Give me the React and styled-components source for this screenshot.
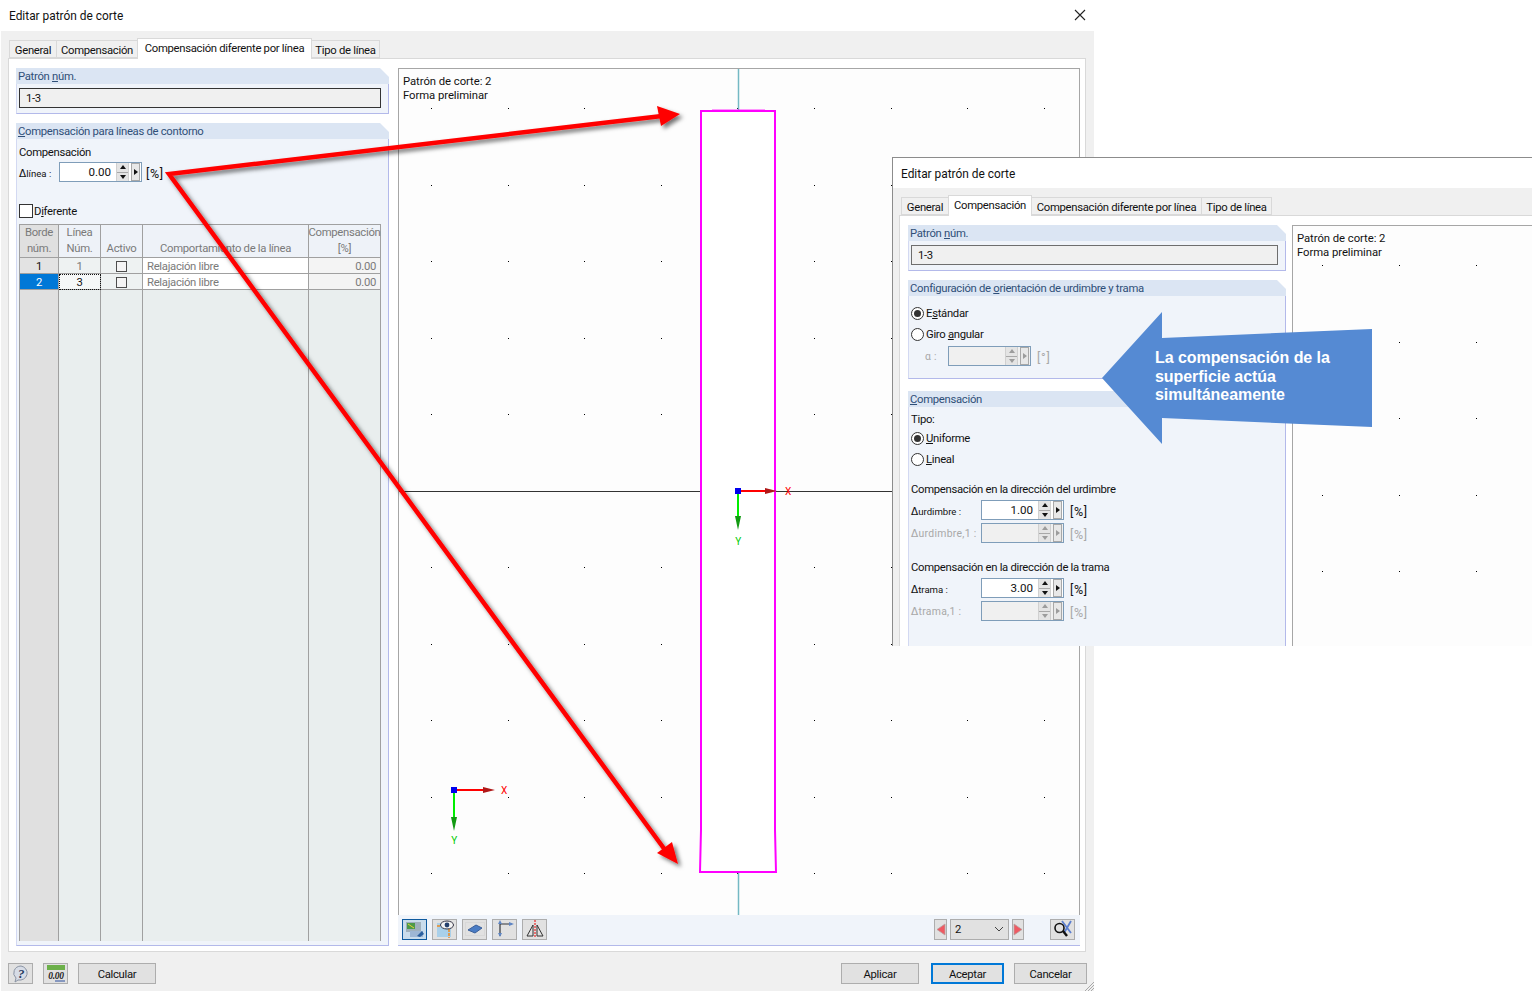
import React from "react";
import styled, { createGlobalStyle } from "styled-components";

const GlobalStyle = createGlobalStyle`
  html, body {
    margin: 0;
    background: #fff;
  }
  body {
    font-family: Roboto, "Noto Sans", sans-serif;
    font-size: 11.3px;
    letter-spacing: -0.3px;
    color: #111;
  }
  * { box-sizing: border-box; }
`;

const Page = styled.div`
  position: relative;
  width: 1532px;
  height: 992px;
  overflow: hidden;
`;

const MainDialog = styled.div`
  width: 1094px;
  height: 991px;
  display: flex;
  flex-direction: column;
`;

const SideDialog = styled.div`
  position: absolute;
  left: 892px;
  top: 157px;
  width: 640px;
  height: 489px;
  background: #fff;
  border-top: 1px solid #8c8c8c;
  border-left: 1px solid #8c8c8c;
  display: flex;
  flex-direction: column;
  overflow: hidden;
`;

const TitleBar = styled.div`
  flex: 0 0 ${(p) => p.$h}px;
  display: flex;
  align-items: center;
  justify-content: space-between;
  padding: 1px 8px 0 ${(p) => p.$left}px;
  font-size: 11.9px;
  letter-spacing: 0;
  background: #fff;
  svg {
    margin-top: -2px;
  }
`;

const Body = styled.div`
  flex: 1;
  min-height: 0;
  margin-left: ${(p) => p.$left || 0}px;
  padding-left: ${(p) => p.$pad}px;
  background: #f0f0f0;
  display: flex;
  flex-direction: column;
`;

const TabStrip = styled.div`
  flex: 0 0 ${(p) => p.$h}px;
  display: flex;
  align-items: flex-end;
  padding-left: ${(p) => p.$left}px;
`;

const Tab = styled.div`
  width: ${(p) => p.$w}px;
  height: ${(p) => (p.$active ? 21 : 18)}px;
  margin-bottom: ${(p) => (p.$active ? -1 : 0)}px;
  padding: ${(p) => (p.$active ? "0 0 1px" : "3px 0 0")};
  display: flex;
  align-items: center;
  justify-content: center;
  white-space: nowrap;
  background: ${(p) => (p.$active ? "#fff" : "#f0f0f0")};
  border: 1px solid #d9d9d9;
  border-bottom: ${(p) => (p.$active ? "none" : "1px solid #d9d9d9")};
  margin-left: -1px;
  position: relative;
  z-index: ${(p) => (p.$active ? 1 : 0)};
`;

const TabPanel = styled.div`
  flex: ${(p) => (p.$h ? `0 0 ${p.$h}px` : "1")};
  min-height: 0;
  width: ${(p) => p.$w}px;
  background: #fff;
  border: 1px solid #d9d9d9;
  display: flex;
  gap: ${(p) => p.$gap}px;
  padding: 9px 5px 5px ${(p) => p.$left}px;
`;

const LeftColumn = styled.div`
  flex: 0 0 ${(p) => p.$w}px;
  min-width: 0;
  display: flex;
  flex-direction: column;
  gap: 9px;
  min-height: 0;
`;

const RightColumn = styled.div`
  flex: 1;
  min-width: 0;
  display: flex;
  flex-direction: column;
`;

const Group = styled.section`
  flex: ${(p) => (p.$grow ? "1" : "none")};
  min-height: 0;
  margin-top: ${(p) => p.$mt || 0}px;
  display: flex;
  flex-direction: column;
`;

const GroupHead = styled.div`
  height: 16px;
  flex: none;
  padding-left: 2px;
  line-height: 18px;
  color: #2f4f78;
  background: #dbe5f3;
  clip-path: polygon(0 0, calc(100% - 9px) 0, 100% 9px, 100% 100%, 0 100%);
`;

const GroupBody = styled.div`
  flex: ${(p) => (p.$h ? `0 0 ${p.$h}px` : "1")};
  min-height: 0;
  display: flex;
  flex-direction: column;
  padding: ${(p) => p.$top || 0}px 7px 0 2px;
  background: #f0f4fa;
  border: 1px solid #b3b9ea;
  border-top: none;
  border-left-color: #d3d9f2;
`;

const Line = styled.div`
  flex: none;
  height: ${(p) => p.$h}px;
  margin-top: ${(p) => p.$mt || 0}px;
  padding-left: ${(p) => p.$indent || 0}px;
  display: flex;
  align-items: center;
  gap: ${(p) => p.$gap || 0}px;
  color: ${(p) => (p.$muted ? "#9a9a9a" : "#111")};
  white-space: nowrap;
`;

const Key = styled.span`
  text-decoration: underline;
  text-underline-offset: 1px;
`;

const ReadOnlyField = styled.div`
  height: 20px;
  flex: none;
  display: flex;
  align-items: center;
  padding-left: 6px;
  background: #f0f0f0;
  border: 1.5px solid ${(p) => p.$edge};
`;

const Delta = styled.span`
  flex: 0 0 ${(p) => p.$w}px;
  padding-top: 1px;
  color: ${(p) => (p.$muted ? "#a8a8a8" : "#111")};
  font-size: ${(p) => (p.$muted ? 10.4 : 9.6)}px;
  letter-spacing: ${(p) => (p.$muted ? 0.3 : 0)}px;
  b {
    font-size: 10.5px;
    font-weight: 400;
    font-family: "DejaVu Sans", sans-serif;
  }
`;

const SpinBox = styled.div`
  width: ${(p) => p.$w}px;
  height: 20px;
  flex: none;
  display: flex;
  align-items: center;
  padding-right: 1px;
  background: ${(p) => (p.$off ? "#f0f0f0" : "#fff")};
  border: 1px solid #7f9db9;
`;

const SpinValue = styled.span`
  flex: 1;
  text-align: right;
  padding-right: 5px;
  font-size: 11.6px;
  letter-spacing: 0;
`;

const SpinStack = styled.div`
  width: 13px;
  height: 18px;
  display: flex;
  flex-direction: column;
  margin-right: 2px;
  border-left: 1px solid #d0d0d0;
  border-right: 1px solid #d0d0d0;
`;

const SpinPart = styled.div`
  flex: 1;
  display: flex;
  align-items: center;
  justify-content: center;
  background: #e4e4e4;
  & + & {
    border-top: 1px solid #a8a8a8;
  }
`;

const SpinNext = styled.div`
  width: 9px;
  height: 18px;
  display: flex;
  align-items: center;
  justify-content: center;
  background: #e8e8e8;
  border: 1px solid #a8a8a8;
`;

const Tri = styled.i`
  display: block;
  width: 0;
  height: 0;
  border-style: solid;
  border-color: transparent;
  ${(p) => {
    const c = p.$off ? "#9c9c9c" : "#111";
    if (p.$dir === "up") return `border-width: 0 3.5px 4px; border-bottom-color: ${c};`;
    if (p.$dir === "down") return `border-width: 4px 3.5px 0; border-top-color: ${c};`;
    return `border-width: 3.5px 0 3.5px 4px; border-left-color: ${c};`;
  }}
`;

const Unit = styled.span`
  margin-left: ${(p) => p.$ml}px;
  padding-top: 2px;
  font-size: 12.5px;
  letter-spacing: 0.7px;
  color: ${(p) => (p.$muted ? "#a8a8a8" : "#111")};
`;

const CheckBoxBig = styled.span`
  width: 14px;
  height: 14px;
  flex: none;
  background: #fff;
  border: 1px solid #333;
`;

const RadioDot = styled.span`
  width: 13px;
  height: 13px;
  flex: none;
  border-radius: 50%;
  border: 1px solid #333;
  background: #fff;
  display: flex;
  align-items: center;
  justify-content: center;
  margin-right: 2px;
  &::after {
    content: "";
    width: 7px;
    height: 7px;
    border-radius: 50%;
    background: ${(p) => (p.$on ? "#333" : "transparent")};
  }
`;

const Grid = styled.div`
  flex: 1;
  min-height: 0;
  margin-top: 4px;
  margin-bottom: 4px;
  display: grid;
  grid-template-columns: 39px 42px 42px 166px minmax(0, 1fr);
  grid-template-rows: 33px 16px 16px 1fr;
  border-top: 1px solid #a0a0a0;
  border-left: 1px solid #a0a0a0;
  color: #7a7a7a;
`;

const HeadCell = styled.div`
  display: flex;
  flex-direction: column;
  justify-content: flex-end;
  align-items: center;
  line-height: 16px;
  text-align: center;
  white-space: nowrap;
  background: ${(p) => (p.$first ? "#e0e0e0" : "#eef2f8")};
  border-right: 1px solid #a0a0a0;
  border-bottom: 1px solid #a0a0a0;
`;

const Cell = styled.div`
  display: flex;
  align-items: center;
  justify-content: ${(p) => p.$align || "center"};
  padding: 1px ${(p) => (p.$align ? 4 : 0)}px 0;
  background: ${(p) => p.$bg || "#eef2f2"};
  color: ${(p) => p.$color || "#7a7a7a"};
  border-right: 1px solid #a0a0a0;
  border-bottom: 1px solid #a0a0a0;
  outline: ${(p) => (p.$focus ? "1px dotted #111" : "none")};
  outline-offset: -1px;
`;

const SmallCheck = styled.span`
  width: 11px;
  height: 11px;
  background: #f4f4f4;
  border: 1px solid #4d4d4d;
`;

const Filler = styled.div`
  background: ${(p) => (p.$first ? "#e0e0e0" : "#e9eeee")};
  border-right: 1px solid #a0a0a0;
`;

const Canvas = styled.div`
  flex: 1;
  min-height: 0;
  position: relative;
  overflow: hidden;
  background: #fdfdfd;
  border: 1px solid #a6a6a6;
  border-bottom: none;
  padding: 6px 4px;
  line-height: 14px;
  svg {
    position: absolute;
    left: 0;
    top: 0;
  }
`;

const CanvasNote = styled.div`
  position: relative;
  letter-spacing: -0.05px;
`;

const ViewBar = styled.div`
  flex: 0 0 31px;
  display: flex;
  align-items: center;
  gap: 5px;
  padding: 0 5px 2px 4px;
  background: #f0f4fa;
  border-bottom: 1px solid #b3b9ea;
`;

const IconButton = styled.div`
  flex: none;
  width: ${(p) => p.$w || 25}px;
  height: 21px;
  margin-left: ${(p) => p.$ml || 0}px;
  display: flex;
  align-items: center;
  justify-content: center;
  background: ${(p) => (p.$active ? "#c9dcec" : "#e1e1e1")};
  border: 1px solid ${(p) => (p.$active ? "#0f5a9e" : "#adadad")};
`;

const Spacer = styled.div`
  flex: 1;
`;

const Combo = styled.div`
  flex: none;
  width: 59px;
  height: 21px;
  margin: 0 -2px;
  display: flex;
  align-items: center;
  justify-content: space-between;
  padding: 0 4px;
  background: #e1e1e1;
  border: 1px solid #adadad;
`;

const Footer = styled.div`
  flex: 0 0 39px;
  display: flex;
  align-items: center;
  padding: 4px 7px 0 0;
`;

const PushButton = styled.div`
  flex: none;
  width: ${(p) => p.$w}px;
  height: 21px;
  margin-left: ${(p) => p.$ml || 0}px;
  padding-top: 1px;
  display: flex;
  align-items: center;
  justify-content: center;
  background: #e1e1e1;
  border: ${(p) => (p.$default ? "2px solid #0078d7" : "1px solid #adadad")};
`;

const Grip = styled.svg`
  position: absolute;
  left: 1084px;
  top: 981px;
`;

const ArrowLayer = styled.svg`
  position: absolute;
  left: 0;
  top: 0;
  pointer-events: none;
`;

const CalloutText = styled.div`
  position: absolute;
  left: 1155px;
  top: 349px;
  font-family: "Liberation Sans", Arial, sans-serif;
  font-size: 16px;
  font-weight: 700;
  line-height: 18.5px;
  letter-spacing: -0.06px;
  color: #fff;
  white-space: nowrap;
`;

const range = (n) => Array.from({ length: n }, (_, i) => i);

const Close = () => (
  <svg width="12" height="12" viewBox="0 0 12 12">
    <path d="M1 1 L11 11 M11 1 L1 11" stroke="#222" strokeWidth="1.1" fill="none" />
  </svg>
);

const Spinner = ({ value, w, off }) => (
  <SpinBox $w={w} $off={off}>
    <SpinValue>{value}</SpinValue>
    <SpinStack>
      <SpinPart><Tri $dir="up" $off={off} /></SpinPart>
      <SpinPart><Tri $dir="down" $off={off} /></SpinPart>
    </SpinStack>
    <SpinNext><Tri $dir="right" $off={off} /></SpinNext>
  </SpinBox>
);

const Axes = ({ x, y, len, xGap, yGap }) => (
  <g>
    <line x1={x} y1={y} x2={x + len - 8} y2={y} stroke="#f00" strokeWidth="2" />
    <path d={`M${x + len - 12} ${y - 3} L${x + len} ${y} L${x + len - 12} ${y + 3} Z`} fill="#b01818" />
    <line x1={x} y1={y} x2={x} y2={y + len - 6} stroke="#0e0" strokeWidth="2" />
    <path d={`M${x - 3} ${y + len - 14} L${x} ${y + len} L${x + 3} ${y + len - 14} Z`} fill="#129a12" />
    <rect x={x - 3} y={y - 3} width="6" height="6" fill="#00e" />
    <text x={x + len + xGap} y={y + 4} fontSize="10" fill="#f00" textAnchor="middle">X</text>
    <text x={x} y={y + len + yGap} fontSize="10" fill="#0c0" textAnchor="middle">Y</text>
  </g>
);

const MainCanvas = () => (
  <svg width="682" height="847" viewBox="399 69 682 847">
    {range(9).map((i) =>
      range(11).map((j) => (
        <rect key={`${i}-${j}`} x={Math.round(431 + 76.6 * i)} y={Math.round(108 + 76.5 * j)} width="1" height="1" fill="#000" />
      ))
    )}
    <line x1="398" y1="491.5" x2="892" y2="491.5" stroke="#333" strokeWidth="1" />
    <line x1="738.5" y1="68" x2="738.5" y2="110" stroke="#74b9c4" strokeWidth="1.5" />
    <line x1="738.5" y1="872" x2="738.5" y2="916" stroke="#74b9c4" strokeWidth="1.5" />
    <path d="M701 111 L775 111 L775 830 L776 872 L700 872 L701 830 Z" fill="#fff" stroke="#f0f" strokeWidth="2" />
    <line x1="712" y1="110" x2="765" y2="110" stroke="#f0f" strokeOpacity=".4" strokeWidth="2" />
    <Axes x={738} y={491} len={39} xGap={11} yGap={15} />
    <Axes x={454} y={790} len={41} xGap={9} yGap={13} />
  </svg>
);

const SideCanvas = () => (
  <svg width="240" height="422" viewBox="1293 226 240 422">
    {range(3).map((i) =>
      range(5).map((j) => (
        <rect key={`${i}-${j}`} x={1322 + 77 * i} y={Math.round(265 + 76.5 * j)} width="1" height="1" fill="#000" />
      ))
    )}
  </svg>
);

const ToolMesh = () => (
  <svg width="20" height="17" viewBox="0 0 20 17">
    <rect x="1" y="1" width="15" height="10" fill="#9fb0bc" />
    <rect x="2" y="2" width="8" height="6" fill="#4d9a48" />
    <path d="M3 3 L9 7" stroke="#e4d33a" strokeWidth="1" />
    <path d="M5 16 L5 10 L18 10 L18 16 Z" fill="#9db6d4" />
    <path d="M12 15 L17 10 L19 13 L15 16 Z" fill="#2c609f" />
  </svg>
);

const ToolEye = () => (
  <svg width="20" height="18" viewBox="0 0 20 18">
    <rect x="2" y="3" width="14" height="14" fill="#a9d0ea" />
    <path d="M2 6 L6 6 M14 9 L14 18" stroke="#ee8a22" strokeWidth="1.5" strokeDasharray="3 1" />
    <ellipse cx="12" cy="5" rx="6.5" ry="4" fill="#f4f4f4" stroke="#334" />
    <circle cx="12" cy="5" r="2.4" fill="#24406d" />
  </svg>
);

const ToolPlate = () => (
  <svg width="20" height="14" viewBox="0 0 20 14">
    <rect x="0.5" y="0.5" width="19" height="13" fill="none" stroke="#cfcfcf" strokeDasharray="1 1" />
    <path d="M3 8 L11 3 L17 6 L10 11 Z" fill="#4a7cc4" stroke="#3a5f9a" />
  </svg>
);

const ToolAxes = () => (
  <svg width="20" height="18" viewBox="0 0 20 18">
    <path d="M5 3 L5 16 M5 4 L17 4" stroke="#30343a" strokeWidth="1.2" fill="none" />
    <path d="M3 13 L5 17 L7 13 Z M14 2 L19 4 L14 6 Z M3 4 L5 0 L7 4 Z" fill="#5f86c5" />
  </svg>
);

const ToolMirror = () => (
  <svg width="20" height="18" viewBox="0 0 20 18">
    <path d="M8 5 L2 16 L8 16 Z M12 5 L18 16 L12 16 Z" fill="none" stroke="#333" />
    <line x1="10" y1="0" x2="10" y2="18" stroke="#e00" strokeDasharray="2 1" />
  </svg>
);

const PrevNext = ({ flip }) => (
  <svg width="10" height="13" viewBox="0 0 10 13">
    <path d={flip ? "M1 1 L9 6.5 L1 12 Z" : "M9 1 L1 6.5 L9 12 Z"} fill="#ef5a63" stroke="#b8a0a0" strokeWidth=".8" />
  </svg>
);

const Chevron = () => (
  <svg width="10" height="6" viewBox="0 0 10 6">
    <path d="M1 1 L5 5 L9 1" stroke="#444" fill="none" />
  </svg>
);

const ZoomOff = () => (
  <svg width="21" height="18" viewBox="0 0 21 18">
    <path d="M10 1 L19 13 M19 1 L12 13" stroke="#5b7fd0" strokeWidth="1.8" />
    <circle cx="7.5" cy="8" r="4.5" fill="none" stroke="#111" strokeWidth="1.6" />
    <path d="M11 11 L15 16" stroke="#111" strokeWidth="2.4" />
  </svg>
);

const HelpIcon = () => (
  <svg width="18" height="18" viewBox="0 0 18 18">
    <path d="M9 1 A7.5 7 0 1 1 6 15 L3 17 L4 13 A7.5 7 0 0 1 9 1 Z" fill="#d7dce6" stroke="#8a93a3" />
    <text x="9" y="13" fontSize="13" fontWeight="700" fontStyle="italic" fontFamily="Liberation Serif, serif" textAnchor="middle" fill="#243a5e">?</text>
  </svg>
);

const UnitsIcon = () => (
  <svg width="20" height="18" viewBox="0 0 20 18">
    <rect x="1" y="0" width="18" height="5" fill="#6cb04a" />
    <text x="10" y="14" fontSize="9.5" fontStyle="italic" fontWeight="700" fontFamily="Liberation Serif, serif" textAnchor="middle" fill="#222">0.00</text>
    <line x1="9" y1="16" x2="19" y2="16" stroke="#2b4f9e" />
  </svg>
);

const MainLeft = () => (
  <LeftColumn $w={373}>
    <Group>
      <GroupHead>Patrón <Key>n</Key>úm.</GroupHead>
      <GroupBody $h={30} $top={4}>
        <ReadOnlyField $edge="#333">1-3</ReadOnlyField>
      </GroupBody>
    </Group>
    <Group $grow>
      <GroupHead><Key>C</Key>ompensación para líneas de contorno</GroupHead>
      <GroupBody $top={4}>
        <Line $h={18}>Compensación</Line>
        <Line $h={20} $mt={1}>
          <Delta $w={40}><b>Δ</b>línea :</Delta>
          <Spinner value="0.00" w={83} />
          <Unit $ml={4}>[%]</Unit>
        </Line>
        <Line $h={18} $mt={20} $gap={1}>
          <CheckBoxBig />
          <span>D<Key>i</Key>ferente</span>
        </Line>
        <Grid>
          <HeadCell $first>Borde<span>núm.</span></HeadCell>
          <HeadCell>Línea<span>Núm.</span></HeadCell>
          <HeadCell>Activo</HeadCell>
          <HeadCell>Comportamiento de la línea</HeadCell>
          <HeadCell>Compensación<span>[%]</span></HeadCell>

          <Cell $bg="#e3e3e3" $color="#111">1</Cell>
          <Cell>1</Cell>
          <Cell><SmallCheck /></Cell>
          <Cell $bg="#fff" $align="flex-start">Relajación libre</Cell>
          <Cell $bg="#f4f4f4" $align="flex-end">0.00</Cell>

          <Cell $bg="#0078d7" $color="#fff">2</Cell>
          <Cell $focus $color="#111" $bg="#f6f8f8">3</Cell>
          <Cell><SmallCheck /></Cell>
          <Cell $bg="#fff" $align="flex-start">Relajación libre</Cell>
          <Cell $bg="#f4f4f4" $align="flex-end">0.00</Cell>

          <Filler $first />
          <Filler />
          <Filler />
          <Filler />
          <Filler />
        </Grid>
      </GroupBody>
    </Group>
  </LeftColumn>
);

const MainRight = () => (
  <RightColumn>
    <Canvas>
      <MainCanvas />
      <CanvasNote>Patrón de corte: 2<br />Forma preliminar</CanvasNote>
    </Canvas>
    <ViewBar>
      <IconButton $active><ToolMesh /></IconButton>
      <IconButton><ToolEye /></IconButton>
      <IconButton><ToolPlate /></IconButton>
      <IconButton><ToolAxes /></IconButton>
      <IconButton><ToolMirror /></IconButton>
      <Spacer />
      <IconButton $w={13}><PrevNext /></IconButton>
      <Combo>2<Chevron /></Combo>
      <IconButton $w={12}><PrevNext flip /></IconButton>
      <IconButton $ml={21}><ZoomOff /></IconButton>
    </ViewBar>
  </RightColumn>
);

const SideLeft = () => (
  <LeftColumn $w={378}>
    <Group>
      <GroupHead>Patrón <Key>n</Key>úm.</GroupHead>
      <GroupBody $h={30} $top={4}>
        <ReadOnlyField $edge="#6e6e6e">1-3</ReadOnlyField>
      </GroupBody>
    </Group>
    <Group>
      <GroupHead>Configuración de <Key>o</Key>rientación de urdimbre y trama</GroupHead>
      <GroupBody $h={83} $top={7}>
        <Line $h={21}><RadioDot $on /><span>E<Key>s</Key>tándar</span></Line>
        <Line $h={21}><RadioDot /><span>Giro <Key>a</Key>ngular</span></Line>
        <Line $h={20} $mt={1} $indent={14} $muted>
          <Delta $w={23} $muted>α :</Delta>
          <Spinner w={83} off />
          <Unit $ml={6} $muted>[°]</Unit>
        </Line>
      </GroupBody>
    </Group>
    <Group $grow $mt={3}>
      <GroupHead><Key>C</Key>ompensación</GroupHead>
      <GroupBody $top={4}>
        <Line $h={17}>Tipo:</Line>
        <Line $h={21}><RadioDot $on /><span><Key>U</Key>niforme</span></Line>
        <Line $h={21}><RadioDot /><span><Key>L</Key>ineal</span></Line>
        <Line $h={18} $mt={10}>Compensación en la dirección del urdimbre</Line>
        <Line $h={20} $mt={2}>
          <Delta $w={70}><b>Δ</b>urdimbre :</Delta>
          <Spinner value="1.00" w={83} />
          <Unit $ml={6}>[%]</Unit>
        </Line>
        <Line $h={20} $mt={3}>
          <Delta $w={70} $muted><b>Δ</b>urdimbre,1 :</Delta>
          <Spinner w={83} off />
          <Unit $ml={6} $muted>[%]</Unit>
        </Line>
        <Line $h={18} $mt={15}>Compensación en la dirección de la trama</Line>
        <Line $h={20} $mt={2}>
          <Delta $w={70}><b>Δ</b>trama :</Delta>
          <Spinner value="3.00" w={83} />
          <Unit $ml={6}>[%]</Unit>
        </Line>
        <Line $h={20} $mt={3}>
          <Delta $w={70} $muted><b>Δ</b>trama,1 :</Delta>
          <Spinner w={83} off />
          <Unit $ml={6} $muted>[%]</Unit>
        </Line>
      </GroupBody>
    </Group>
  </LeftColumn>
);

export default function App() {
  return (
    <Page>
      <GlobalStyle />
      <MainDialog>
        <TitleBar $h={31} $left={9}>
          Editar patrón de corte
          <Close />
        </TitleBar>
        <Body $left={1} $pad={7}>
          <TabStrip $h={27} $left={2}>
            <Tab $w={48}>General</Tab>
            <Tab $w={82}>Compensación</Tab>
            <Tab $w={175} $active>Compensación diferente por línea</Tab>
            <Tab $w={69}>Tipo de línea</Tab>
          </TabStrip>
          <TabPanel $w={1078} $gap={9} $left={7}>
            <MainLeft />
            <MainRight />
          </TabPanel>
          <Footer>
            <IconButton><HelpIcon /></IconButton>
            <IconButton $ml={10}><UnitsIcon /></IconButton>
            <PushButton $w={78} $ml={10}>Calcular</PushButton>
            <Spacer />
            <PushButton $w={78}>Aplicar</PushButton>
            <PushButton $w={73} $ml={12} $default>Aceptar</PushButton>
            <PushButton $w={73} $ml={10}>Cancelar</PushButton>
          </Footer>
        </Body>
      </MainDialog>
      <Grip width="10" height="10" viewBox="0 0 10 10">
        <path d="M10 1 L1 10 M10 4 L4 10 M10 7 L7 10" stroke="#a8a8a8" fill="none" />
      </Grip>

      <ArrowLayer width="1532" height="992" viewBox="0 0 1532 992">
        <defs>
          <filter id="soft" x="-10%" y="-10%" width="120%" height="120%">
            <feDropShadow dx="3" dy="3" stdDeviation="2" floodColor="#000" floodOpacity=".55" />
          </filter>
        </defs>
        <g filter="url(#soft)" fill="#f00">
          <polyline points="662,116 169,174 668,854" fill="none" stroke="#f00" strokeWidth="4.5" strokeLinejoin="miter" />
          <polygon points="657,106 680,114 661,126" />
          <polygon points="657,853 672,842 678,864" />
        </g>
      </ArrowLayer>

      <SideDialog>
        <TitleBar $h={30} $left={8}>Editar patrón de corte</TitleBar>
        <Body $pad={6}>
          <TabStrip $h={27} $left={3}>
            <Tab $w={48}>General</Tab>
            <Tab $w={84} $active>Compensación</Tab>
            <Tab $w={171}>Compensación diferente por línea</Tab>
            <Tab $w={71}>Tipo de línea</Tab>
          </TabStrip>
          <TabPanel $w={640} $h={470} $gap={6} $left={8}>
            <SideLeft />
            <RightColumn>
              <Canvas>
                <SideCanvas />
                <CanvasNote>Patrón de corte: 2<br />Forma preliminar</CanvasNote>
              </Canvas>
            </RightColumn>
          </TabPanel>
        </Body>
      </SideDialog>

      <ArrowLayer width="1532" height="992" viewBox="0 0 1532 992">
        <polygon points="1102,378 1162,312 1162,338 1372,329 1372,427 1162,418 1162,444" fill="#558ad3" />
      </ArrowLayer>
      <CalloutText>
        La compensación de la<br />superficie actúa<br />simultáneamente
      </CalloutText>
    </Page>
  );
}
